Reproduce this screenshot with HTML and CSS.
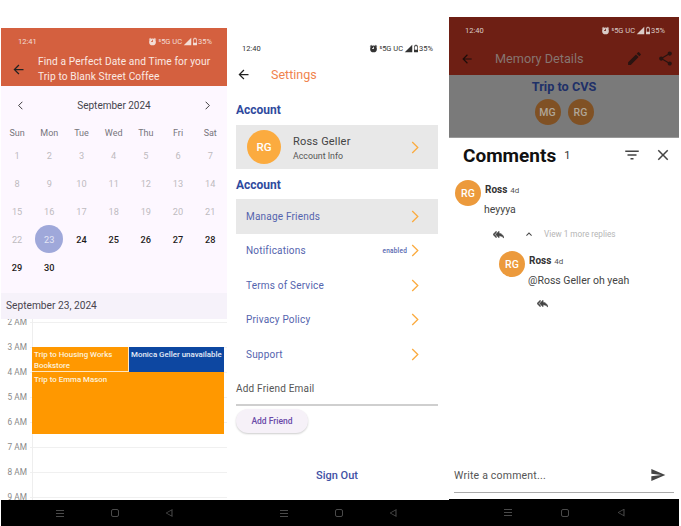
FILE: index.html
```html
<!DOCTYPE html>
<html lang="en">
<head>
    <meta charset="UTF-8">
    <meta name="viewport" content="width=device-width, initial-scale=1.0">
    <title>Trip screens</title>
    <link rel="stylesheet" href="styles.css">
</head>
<body>

<svg class="sprite" xmlns="http://www.w3.org/2000/svg">
    <symbol id="i-back" viewBox="0 0 24 24"><path d="M20 11H7.83l5.59-5.59L12 4l-8 8 8 8 1.41-1.41L7.83 13H20v-2z"/></symbol>
    <symbol id="i-alarm" viewBox="0 0 24 24"><path d="M22 5.7l-4.6-3.9-1.3 1.5 4.6 3.9L22 5.7zM7.9 3.4L6.6 1.9 2 5.7l1.3 1.5 4.6-3.8zM12 4a9 9 0 1 0 0 18 9 9 0 0 0 0-18zm1 9h-5v-2h3V7h2v6z"/></symbol>
    <symbol id="i-signal" viewBox="0 0 24 24"><path d="M2 22L22 2v20H2z"/></symbol>
    <symbol id="i-battery" viewBox="0 0 12 24"><path d="M4 1h4v2h2.5A1.5 1.5 0 0 1 12 4.500V21.500A1.500 1.500 0 0 1 10.500 23H1.500A1.500 1.500 0 0 1 0 21.500V4.500A1.500 1.500 0 0 1 1.500 3H4V1zM2 5v11h8V5H2z"/></symbol>
    <symbol id="i-chev" viewBox="0 0 8 14"><path d="M1 1l6 6-6 6" fill="none" stroke="currentColor" stroke-width="1.400"/></symbol>
    <symbol id="i-edit" viewBox="0 0 24 24"><path d="M3 17.250V21h3.750L17.810 9.940l-3.750-3.750L3 17.250zM20.710 7.040a1 1 0 0 0 0-1.410l-2.340-2.340a1 1 0 0 0-1.410 0l-1.830 1.830 3.750 3.750 1.830-1.830z"/></symbol>
    <symbol id="i-share" viewBox="0 0 24 24"><path d="M18 16.080c-.76 0-1.440.3-1.960.77L8.910 12.700c.05-.23.09-.46.09-.7s-.04-.47-.09-.7l7.050-4.110c.54.5 1.250.81 2.040.81 1.660 0 3-1.340 3-3s-1.340-3-3-3-3 1.340-3 3c0 .24.04.47.09.7L8.040 9.810C7.500 9.310 6.790 9 6 9c-1.660 0-3 1.340-3 3s1.340 3 3 3c.79 0 1.500-.31 2.040-.81l7.120 4.160c-.05.21-.08.43-.08.65 0 1.610 1.310 2.920 2.920 2.920s2.920-1.310 2.920-2.920-1.310-2.920-2.920-2.920z"/></symbol>
    <symbol id="i-filter" viewBox="0 0 24 24"><path d="M10 18h4v-2h-4v2zM3 6v2h18V6H3zm3 7h12v-2H6v2z"/></symbol>
    <symbol id="i-close" viewBox="0 0 24 24"><path d="M19 6.410L17.590 5 12 10.590 6.410 5 5 6.410 10.590 12 5 17.590 6.410 19 12 13.410 17.590 19 19 17.590 13.410 12z"/></symbol>
    <symbol id="i-reply" viewBox="0 0 24 24"><path stroke="currentColor" stroke-width="1.500" d="M7 8V5l-7 7 7 7v-3l-4-4 4-4zm6 1V5l-7 7 7 7v-4.100c5 0 8.500 1.600 11 5.100-1-5-4-10-11-11z"/></symbol>
    <symbol id="i-up" viewBox="0 0 24 24"><path d="M12 8l-7 7 1.600 1.600 5.400-5.400 5.400 5.400L19 15z"/></symbol>
    <symbol id="i-send" viewBox="0 0 24 24"><path d="M2.010 21L23 12 2.010 3 2 10l15 2-15 2z"/></symbol>
</svg>

<!-- calendar screen -->
<section class="phone phone-cal">
    <header class="cal-head">
        <div class="status">
            <span>12:41</span>
            <span class="status-right"><svg class="s-ic"><use href="#i-alarm"/></svg><span>⁵5G UC</span><svg class="s-ic"><use href="#i-signal"/></svg><svg class="s-bat"><use href="#i-battery"/></svg><span>35%</span></span>
        </div>
        <div class="cal-title">
            <svg class="back"><use href="#i-back"/></svg>
            <span>Find a Perfect Date and Time for your Trip to Blank Street Coffee</span>
        </div>
    </header>
    <div class="cal">
        <div class="month">
            <svg class="month-arrow"><use href="#i-chev"/></svg>
            <span>September 2024</span>
            <svg class="month-arrow month-next"><use href="#i-chev"/></svg>
        </div>
        <div class="days">
            <span class="dow">Sun</span><span class="dow">Mon</span><span class="dow">Tue</span><span class="dow">Wed</span><span class="dow">Thu</span><span class="dow">Fri</span><span class="dow">Sat</span>
            <span>1</span><span>2</span><span>3</span><span>4</span><span>5</span><span>6</span><span>7</span>
            <span>8</span><span>9</span><span>10</span><span>11</span><span>12</span><span>13</span><span>14</span>
            <span>15</span><span>16</span><span>17</span><span>18</span><span>19</span><span>20</span><span>21</span>
            <span>22</span><span class="picked"><b>23</b></span><span class="open">24</span><span class="open">25</span><span class="open">26</span><span class="open">27</span><span class="open">28</span>
            <span class="open">29</span><span class="open">30</span>
        </div>
    </div>
    <div class="date-bar">September 23, 2024</div>
    <div class="timeline">
        <div class="hour"><span>2 AM</span></div>
        <div class="hour"><span>3 AM</span></div>
        <div class="hour"><span>4 AM</span></div>
        <div class="hour"><span>5 AM</span></div>
        <div class="hour"><span>6 AM</span></div>
        <div class="hour"><span>7 AM</span></div>
        <div class="hour"><span>8 AM</span></div>
        <div class="hour"><span>9 AM</span></div>
        <div class="event ev-housing">Trip to Housing Works Bookstore</div>
        <div class="event ev-monica">Monica Geller unavailable</div>
        <div class="event ev-emma">Trip to Emma Mason</div>
    </div>
    <nav class="navbar">
        <span class="nav-menu"></span><span class="nav-home"></span><span class="nav-back"></span>
    </nav>
</section>

<!-- settings screen -->
<section class="phone phone-set">
    <div class="set-top">
        <div class="status status-dark">
            <span>12:40</span>
            <span class="status-right"><svg class="s-ic"><use href="#i-alarm"/></svg><span>⁵5G UC</span><svg class="s-ic"><use href="#i-signal"/></svg><svg class="s-bat"><use href="#i-battery"/></svg><span>35%</span></span>
        </div>
        <div class="set-title">
            <svg class="back"><use href="#i-back"/></svg>
            <span>Settings</span>
        </div>
    </div>
    <div class="set-body">
        <h2>Account</h2>
        <div class="profile">
            <div class="avatar av-big">RG</div>
            <div class="profile-text">
                <div class="profile-name">Ross Geller</div>
                <div class="profile-sub">Account Info</div>
            </div>
            <svg class="chev"><use href="#i-chev"/></svg>
        </div>
        <h2 class="h2-second">Account</h2>
        <div class="row row-on"><span>Manage Friends</span><svg class="chev"><use href="#i-chev"/></svg></div>
        <div class="row"><span>Notifications</span><em>enabled</em><svg class="chev chev-near"><use href="#i-chev"/></svg></div>
        <div class="row"><span>Terms of Service</span><svg class="chev"><use href="#i-chev"/></svg></div>
        <div class="row"><span>Privacy Policy</span><svg class="chev"><use href="#i-chev"/></svg></div>
        <div class="row"><span>Support</span><svg class="chev"><use href="#i-chev"/></svg></div>
        <div class="email">Add Friend Email</div>
        <button class="add-btn">Add Friend</button>
        <div class="signout">Sign Out</div>
    </div>
    <nav class="navbar">
        <span class="nav-menu"></span><span class="nav-home"></span><span class="nav-back"></span>
    </nav>
</section>

<!-- memory details + comment sheet -->
<section class="phone phone-mem">
    <div class="mem-bar">
        <div class="status">
            <span>12:40</span>
            <span class="status-right"><svg class="s-ic"><use href="#i-alarm"/></svg><span>⁵5G UC</span><svg class="s-ic"><use href="#i-signal"/></svg><svg class="s-bat"><use href="#i-battery"/></svg><span>35%</span></span>
        </div>
        <div class="mem-title">
            <svg class="back"><use href="#i-back"/></svg>
            <span>Memory Details</span>
            <svg class="mem-ic"><use href="#i-edit"/></svg>
            <svg class="mem-ic"><use href="#i-share"/></svg>
        </div>
    </div>
    <div class="mem-dim">
        <div class="mem-trip">Trip to CVS</div>
        <div class="mem-people">
            <div class="avatar av-dim">MG</div>
            <div class="avatar av-dim">RG</div>
        </div>
    </div>
    <div class="sheet">
        <div class="sheet-head">
            <span class="sheet-title">Comments</span>
            <span class="sheet-count">1</span>
            <svg class="sheet-ic sheet-filter"><use href="#i-filter"/></svg>
            <svg class="sheet-ic"><use href="#i-close"/></svg>
        </div>
        <div class="comment">
            <div class="avatar av-com">RG</div>
            <div>
                <div class="c-meta"><b>Ross</b> 4d</div>
                <div class="c-text">heyyya</div>
            </div>
        </div>
        <div class="c-actions">
            <svg class="reply"><use href="#i-reply"/></svg>
            <svg class="up"><use href="#i-up"/></svg>
            <span>View 1 more replies</span>
        </div>
        <div class="comment comment-sub">
            <div class="avatar av-com">RG</div>
            <div>
                <div class="c-meta"><b>Ross</b> 4d</div>
                <div class="c-text">@Ross Geller oh yeah</div>
            </div>
        </div>
        <div class="c-actions c-actions-sub">
            <svg class="reply"><use href="#i-reply"/></svg>
        </div>
        <div class="write">
            <span>Write a comment...</span>
            <svg class="send"><use href="#i-send"/></svg>
        </div>
    </div>
    <nav class="navbar">
        <span class="nav-menu"></span><span class="nav-home"></span><span class="nav-back"></span>
    </nav>
</section>

</body>
</html>
```

FILE: styles.css
```css
* {
    box-sizing: border-box;
}

body {
    margin: 0;
    width: 681px;
    height: 526px;
    overflow: hidden;
    background-color: #fff;
    font-family: Roboto, 'Liberation Sans', sans-serif;
    display: flex;
    padding-left: 1px;
}

.sprite {
    width: 0;
    height: 0;
    position: absolute;
}

.phone {
    height: 526px;
    display: flex;
    flex-direction: column;
}

.phone-cal {
    width: 226px;
    padding-top: 28px;
}

.phone-set {
    width: 222px;
    padding-top: 40px;
}

.phone-mem {
    width: 230px;
    padding-top: 17px;
}

/* status bar */
.status {
    height: 16px;
    display: flex;
    justify-content: space-between;
    align-items: center;
    font-size: 7.5px;
    color: #f3ddd6;
}

.status-right {
    display: flex;
    align-items: center;
    gap: 1px;
}

.s-ic {
    width: 9px;
    height: 9px;
    fill: currentColor;
}

.s-bat {
    width: 4px;
    height: 9px;
    fill: currentColor;
}

.status-dark {
    color: #333;
}

.back {
    width: 15px;
    height: 15px;
    fill: #222;
    flex-shrink: 0;
}

/* calendar */
.cal-head {
    height: 58px;
    background-color: #d4603f;
    color: #fbe9e2;
    padding: 27px 0 0;
    position: relative;
}

.cal-head .status {
    position: absolute;
    top: 5px;
    left: 17px;
    right: 15px;
}

.cal-title {
    display: flex;
    align-items: center;
    font-size: 10.2px;
    line-height: 14.500px;
    letter-spacing: .1px;
    padding-left: 10px;
}

.cal-title span {
    margin-left: 12px;
    width: 180px;
}

.cal {
    background-color: #fdf7ff;
    height: 207px;
    padding-top: 9px;
}

.month {
    height: 20px;
    display: flex;
    justify-content: space-between;
    align-items: center;
    padding: 0 17px;
    font-size: 10px;
    color: #44444c;
}

.month-arrow {
    width: 5px;
    height: 9px;
    color: #222;
    transform: scaleX(-1);
}

.month-next {
    transform: none;
}

.days {
    display: grid;
    grid-template-columns: repeat(7, 32.200px);
    grid-template-rows: 16px;
    grid-auto-rows: 28px;
    font-size: 9.2px;
    color: #bdbbc0;
    margin-top: 10px;
}

.days span {
    display: flex;
    align-items: center;
    justify-content: center;
}

.days .dow {
    color: #77757c;
    font-size: 9px;
}

.days .open {
    color: #1d1b20;
    font-weight: 500;
}

.picked b {
    width: 28px;
    height: 28px;
    border-radius: 50%;
    background-color: #9fa8da;
    color: #e4e6f5;
    font-weight: 400;
    display: flex;
    align-items: center;
    justify-content: center;
}

.date-bar {
    height: 26px;
    background-color: #f6f2fa;
    font-size: 10.2px;
    color: #49454f;
    padding: 7px 0 0 5px;
}

.timeline {
    flex: 1;
    position: relative;
    background-color: #fff;
    overflow: hidden;
}

.timeline:before {
    content: "";
    position: absolute;
    left: 31px;
    top: 0;
    bottom: 0;
    width: 1px;
    background-color: #eee;
}

.hour {
    height: 25px;
    display: flex;
    align-items: center;
    font-size: 8.300px;
    color: #8a8a8a;
}

.hour:first-child {
    margin-top: -9.500px;
}

.hour span {
    width: 26px;
    text-align: right;
    margin-right: 3px;
    flex-shrink: 0;
}

.hour:after {
    content: "";
    flex: 1;
    height: 1px;
    background-color: #f0f0f0;
}

.event {
    position: absolute;
    color: #fdf2dd;
    font-size: 7.900px;
    font-weight: 500;
    line-height: 11px;
    padding: 2px 2px;
    background-color: #ff9800;
}

.ev-housing {
    left: 31px;
    top: 28px;
    width: 96px;
    height: 25px;
    border-bottom: 1px solid #ffe7c2;
}

.ev-monica {
    left: 127px;
    top: 28px;
    width: 96px;
    height: 25px;
    background-color: #0d47a1;
    color: #e4ebf6;
    border-left: 1px solid #ffe7c2;
    white-space: nowrap;
}

.ev-emma {
    left: 31px;
    top: 53px;
    width: 192px;
    height: 62px;
}

/* bottom bar */
.navbar {
    height: 26px;
    background-color: #000;
    display: flex;
    justify-content: center;
    align-items: center;
    gap: 47px;
    flex-shrink: 0;
}

.phone-mem .navbar {
    height: 27px;
    gap: 49px;
}

.nav-menu {
    width: 8px;
    height: 7px;
    border-top: 1px solid #4a4a4a;
    border-bottom: 1px solid #4a4a4a;
    background: linear-gradient(#4a4a4a, #4a4a4a) center / 100% 1px no-repeat;
}

.nav-home {
    width: 8px;
    height: 8px;
    border: 1px solid #4a4a4a;
    border-radius: 2px;
}

.nav-back {
    width: 7px;
    height: 8px;
    background-color: #4a4a4a;
    clip-path: polygon(100% 0, 100% 100%, 0 50%, 100% 0, 85% 18%, 20% 50%, 85% 82%, 85% 18%);
}

/* settings */
.set-top {
    height: 49px;
}

.set-top .status {
    padding: 0 16px 0 15px;
}

.set-title {
    display: flex;
    align-items: center;
    font-size: 12.500px;
    color: #f0834d;
    padding: 11px 0 0 9px;
}

.set-title span {
    margin-left: 20px;
}

.set-body {
    flex: 1;
    padding: 14px 11px 0 9px;
    display: flex;
    flex-direction: column;
}

h2 {
    margin: 0;
    font-size: 12px;
    line-height: 14px;
    font-weight: 700;
    color: #2f4a9e;
}

.h2-second {
    margin-top: 9px;
}

.profile {
    height: 44px;
    margin-top: 8px;
    background-color: #e8e8e8;
    display: flex;
    align-items: center;
    padding: 0 19px 0 11px;
}

.avatar {
    border-radius: 50%;
    display: flex;
    align-items: center;
    justify-content: center;
    flex-shrink: 0;
    color: #fff;
    font-weight: 500;
}

.av-big {
    width: 34px;
    height: 34px;
    background-color: #fbab3f;
    font-size: 11.500px;
}

.profile-text {
    flex: 1;
    margin-left: 12px;
    padding-top: 1px;
}

.profile-name {
    font-size: 11px;
    color: #444;
    letter-spacing: .2px;
}

.profile-sub {
    font-size: 8.800px;
    color: #555;
    margin-top: 3px;
}

.chev {
    width: 8px;
    height: 13px;
    color: #fbab3f;
    flex-shrink: 0;
}

.row {
    height: 34.500px;
    display: flex;
    align-items: center;
    padding: 0 19px 0 10px;
    font-size: 10px;
    letter-spacing: .2px;
    color: #5464ae;
}

.row span {
    flex: 1;
}

.row em {
    font-style: normal;
    font-weight: 500;
    font-size: 6.500px;
    margin-right: 4px;
}

.row-on {
    background-color: #e8e8e8;
    margin-top: 7px;
}

.email {
    font-size: 10px;
    letter-spacing: .2px;
    color: #555;
    padding: 11px 0 9px;
    border-bottom: 2px solid #cfcfcf;
    height: 34.500px;
}

.add-btn {
    align-self: flex-start;
    margin-top: 3px;
    width: 72px;
    height: 24px;
    border: none;
    border-radius: 12px;
    background-color: #f6f1f8;
    box-shadow: 0 1px 2px rgba(0, 0, 0, 0.2);
    color: #6a4ba8;
    font-family: inherit;
    font-size: 8.500px;
    font-weight: 500;
    padding: 0;
}

.signout {
    margin-top: 36px;
    text-align: center;
    font-size: 11px;
    font-weight: 500;
    color: #3f51a5;
}

/* memory details */
.mem-bar {
    height: 58px;
    background-color: #6e1f14;
    padding: 5px 14px 0 16px;
}

.mem-bar .status {
    color: #d9cbc7;
}

.mem-title {
    display: flex;
    align-items: center;
    margin-top: 12px;
    margin-left: -5px;
    margin-right: -9px;
    font-size: 12.700px;
    color: #867570;
}

.mem-title span {
    margin-left: 21px;
    flex: 1;
}

.mem-title .back {
    fill: #1f0d0a;
    width: 14px;
    height: 14px;
}

.mem-ic {
    width: 17px;
    height: 17px;
    fill: #2a1411;
    margin-left: 14px;
}

.mem-dim {
    height: 63px;
    background-color: #7a7a7a;
    border-bottom: 1px solid #999;
    display: flex;
    flex-direction: column;
    align-items: center;
    padding-top: 4px;
}

.mem-trip {
    font-size: 12.700px;
    font-weight: 700;
    color: #1f3068;
}

.mem-people {
    display: flex;
    gap: 7px;
    margin-top: 5px;
}

.av-dim {
    width: 26px;
    height: 26px;
    background-color: #805124;
    color: #b0a698;
    font-size: 10.500px;
}

.sheet {
    flex: 1;
    background-color: #fff;
    display: flex;
    flex-direction: column;
    padding: 0 5px 0 6px;
}

.sheet-head {
    height: 34px;
    display: flex;
    align-items: center;
    padding-left: 8px;
}

.sheet-title {
    font-size: 19px;
    font-weight: 700;
    color: #111;
}

.sheet-count {
    font-size: 11px;
    margin-left: 8px;
    color: #333;
    flex: 1;
}

.sheet-ic {
    width: 18px;
    height: 18px;
    fill: #444;
    margin-right: 2px;
}

.sheet-filter {
    margin-right: 13px;
}

.comment {
    display: flex;
    margin-top: 8px;
    gap: 3px;
}

.comment-sub {
    margin: 10px 0 0 44px;
}

.av-com {
    width: 26px;
    height: 26px;
    background-color: #ec9a3c;
    font-size: 10.500px;
}

.c-meta {
    font-size: 8px;
    color: #555;
    padding-left: 1px;
    padding-top: 4px;
}

.c-meta b {
    font-size: 10px;
    font-weight: 700;
    color: #333;
    margin-right: 1px;
}

.c-text {
    font-size: 10.500px;
    color: #444;
    margin-top: 8px;
}

.c-actions {
    display: flex;
    align-items: center;
    height: 14px;
    margin-top: 11px;
    padding-left: 38px;
    font-size: 8.200px;
    color: #b5b5b5;
}

.c-actions-sub {
    padding-left: 82px;
    margin-top: 9px;
}

.reply {
    width: 11px;
    height: 11px;
    fill: #444;
    color: #444;
}

.up {
    width: 10px;
    height: 10px;
    fill: #444;
    margin: 0 10px 0 20px;
}

.write {
    margin-top: auto;
    margin-left: -1px;
    height: 39px;
    margin-bottom: 6px;
    border-bottom: 1px solid #aaa;
    display: flex;
    align-items: center;
    justify-content: space-between;
    font-size: 10.500px;
    letter-spacing: .2px;
    color: #555;
    padding: 4px 8px 0 0;
}

.send {
    width: 16px;
    height: 16px;
    fill: #444;
}
```
